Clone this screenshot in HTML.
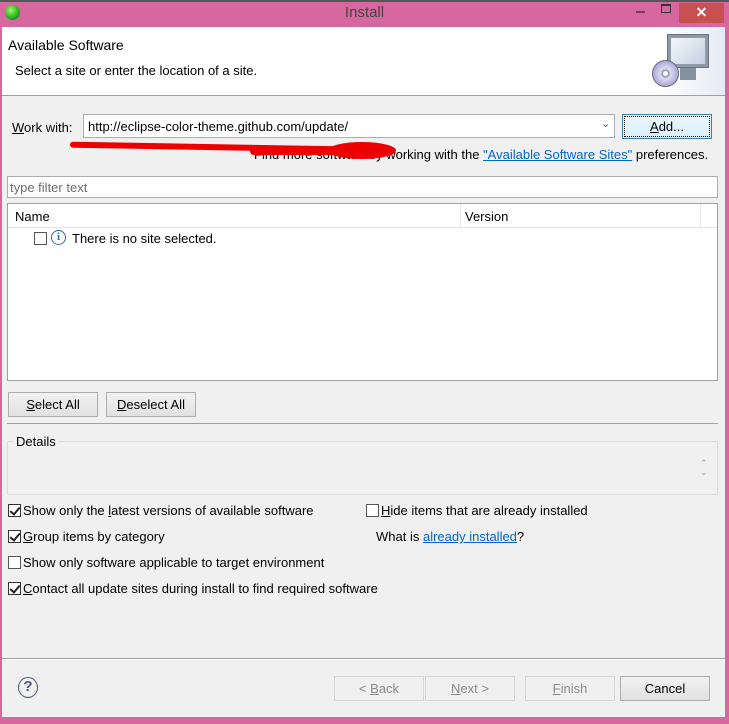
<!DOCTYPE html>
<html><head><meta charset="utf-8"><style>
*{margin:0;padding:0;box-sizing:border-box}
body{width:729px;height:724px;background:#d6689f;font-family:"Liberation Sans",sans-serif;font-size:13px;color:#000;position:relative;overflow:hidden}
.a{position:absolute}
.win{left:2px;top:27px;width:723px;height:690px;background:#f0f0f0}
.btn{position:absolute;border:1px solid #adadad;background:linear-gradient(#f2f2f2,#e1e1e1);text-align:center;line-height:23px;height:25px}
.dis{border-color:#d5d5d5;background:#f0f0f0;color:#8a8a8a}
.cb{position:absolute;width:13px;height:13px;border:1px solid #333;background:#fff}
.cb.on::after{content:"";position:absolute;left:3px;top:0px;width:4px;height:8px;border:solid #222;border-width:0 2px 2px 0;transform:rotate(40deg)}
u{text-decoration:underline}
.lnk{color:#0066cc;text-decoration:underline}
</style></head><body>
<div class="a" style="left:0;top:0;width:729px;height:2px;background:#555"></div>
<div class="a" style="left:5px;top:5px;width:15px;height:15px;border-radius:50%;background:radial-gradient(circle at 40% 35%,#9f6,#2a2 60%,#164)"></div>
<div class="a" style="left:0;top:4px;width:729px;text-align:center;font-size:15px;color:#444">Install</div>
<div class="a" style="left:636px;top:11px;width:9px;height:2px;background:#7a3a5a"></div>
<div class="a" style="left:661px;top:4px;width:10px;height:9px;border:1px solid #333;border-top-width:2px"></div>
<div class="a" style="left:679px;top:3px;width:45px;height:20px;background:#c75050;color:#fff;text-align:center;font-size:14px;line-height:18px;font-weight:bold">✕</div>
<div class="a win"></div>
<div class="a" style="left:2px;top:27px;width:723px;height:69px;background:#fff;border-bottom:1px solid #a0a0a0"></div>
<div class="a" style="left:8px;top:37px;font-size:14px">Available Software</div>
<div class="a" style="left:15px;top:63px">Select a site or enter the location of a site.</div>
<div class="a" style="left:660px;top:27px;width:65px;height:68px;background:linear-gradient(90deg,#fff,#e6eaf4)"></div>
<div class="a" style="left:667px;top:34px;width:42px;height:34px;background:#8e9aa8;border:1px solid #6a7480"></div>
<div class="a" style="left:671px;top:38px;width:34px;height:26px;background:linear-gradient(135deg,#f4f8fc,#c4d0e0)"></div>
<div class="a" style="left:680px;top:68px;width:16px;height:12px;background:#8590a0"></div>
<div class="a" style="left:652px;top:60px;width:27px;height:27px;border-radius:50%;background:radial-gradient(circle,#fff 12%,#8a90a8 16%,#dcdcf0 30%,#b8b4e0 60%,#9090c0 100%);border:1px solid #667"></div>
<div class="a" style="left:12px;top:120px"><u>W</u>ork with:</div>
<div class="a" style="left:83px;top:114px;width:532px;height:24px;background:#fff;border:1px solid #abadb3"></div>
<div class="a" style="left:88px;top:119px">http://eclipse-color-theme.github.com/update/</div>
<div class="a" style="left:601px;top:117px;font-size:11px;color:#555">⌄</div>
<div class="btn" style="left:622px;top:114px;width:90px;border:1px solid #3c7fb1;background:linear-gradient(#eaf6fd,#d9f0fc)"><div style="border:1px dotted #000;margin:1px;line-height:19px;height:21px"><u>A</u>dd...</div></div>
<div class="a" style="left:254px;top:147px;color:#000">Find more software by working with the <span class="lnk">"Available Software Sites"</span> preferences.</div>
<div class="a" style="left:70px;top:144px;width:270px;height:6px;background:#e00;border-radius:3px;transform:rotate(1deg)"></div>
<div class="a" style="left:250px;top:147px;width:130px;height:8px;background:#e00;border-radius:4px"></div>
<div class="a" style="left:328px;top:142px;width:68px;height:17px;background:#e00;border-radius:50%"></div>
<div class="a" style="left:7px;top:176px;width:711px;height:22px;background:#fff;border:1px solid #abadb3"></div>
<div class="a" style="left:10px;top:180px;color:#6d6d6d">type filter text</div>
<div class="a" style="left:7px;top:203px;width:711px;height:178px;background:#fff;border:1px solid #a0a0a0"></div>
<div class="a" style="left:8px;top:204px;width:709px;height:24px;background:#fff;border-bottom:1px solid #e5e5e5"></div>
<div class="a" style="left:460px;top:204px;width:1px;height:24px;background:#e5e5e5"></div>
<div class="a" style="left:700px;top:204px;width:1px;height:24px;background:#e5e5e5"></div>
<div class="a" style="left:15px;top:209px">Name</div>
<div class="a" style="left:465px;top:209px">Version</div>
<div class="cb" style="left:34px;top:232px;border-color:#555"></div>
<div class="a" style="left:51px;top:230px;width:15px;height:15px;border:1.5px solid #2a6ab0;border-radius:50%;color:#2a6ab0;font-size:11px;line-height:12px;text-align:center;font-weight:bold;font-family:'Liberation Serif',serif">i</div>
<div class="a" style="left:72px;top:231px">There is no site selected.</div>
<div class="btn" style="left:8px;top:392px;width:90px"><u>S</u>elect All</div>
<div class="btn" style="left:106px;top:392px;width:90px"><u>D</u>eselect All</div>
<div class="a" style="left:7px;top:423px;width:711px;height:1px;background:#a0a0a0"></div>
<div class="a" style="left:7px;top:441px;width:711px;height:54px;border:1px solid #dcdcdc"></div>
<div class="a" style="left:14px;top:434px;background:#f0f0f0;padding:0 2px">Details</div>
<div class="a" style="left:700px;top:459px;font-size:9px;color:#999;line-height:9px">⌃<br>⌄</div>
<div class="cb on" style="left:8px;top:504px"></div><div class="a" style="left:23px;top:503px">Show only the <u>l</u>atest versions of available software</div>
<div class="cb" style="left:366px;top:504px;border-color:#555"></div><div class="a" style="left:381px;top:503px"><u>H</u>ide items that are already installed</div>
<div class="cb on" style="left:8px;top:530px"></div><div class="a" style="left:23px;top:529px"><u>G</u>roup items by category</div>
<div class="a" style="left:376px;top:529px">What is <span class="lnk">already installed</span>?</div>
<div class="cb" style="left:8px;top:556px;border-color:#555"></div><div class="a" style="left:23px;top:555px">Show only software applicable to target environment</div>
<div class="cb on" style="left:8px;top:582px"></div><div class="a" style="left:23px;top:581px"><u>C</u>ontact all update sites during install to find required software</div>
<div class="a" style="left:2px;top:658px;width:723px;height:1px;background:#a0a0a0"></div>
<div class="a" style="left:2px;top:659px;width:723px;height:1px;background:#fff"></div>
<div class="a" style="left:18px;top:677px;width:20px;height:21px;border:1.5px solid #4a5a78;border-radius:50%;color:#4a5a78;font-weight:bold;text-align:center;line-height:18px;font-size:15px">?</div>
<div class="btn dis" style="left:334px;top:676px;width:90px">&lt; <u>B</u>ack</div>
<div class="btn dis" style="left:425px;top:676px;width:90px"><u>N</u>ext &gt;</div>
<div class="btn dis" style="left:525px;top:676px;width:90px"><u>F</u>inish</div>
<div class="btn" style="left:620px;top:676px;width:90px">Cancel</div>
</body></html>
